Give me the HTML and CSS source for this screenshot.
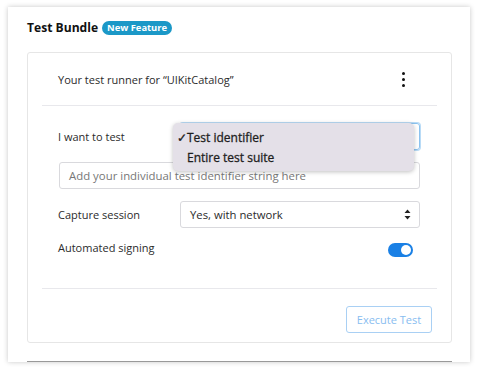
FILE: index.html
```html
<!DOCTYPE html>
<html>
<head>
<meta charset="utf-8">
<link rel="stylesheet" href="styles.css">
</head>
<body>
<div class="outer">
  <div class="title-row">
    <span class="title">Test Bundle</span>
    <span class="badge">New Feature</span>
  </div>
  <div class="card">
    <div class="card-head">
      <span class="runner">Your test runner for “UIKitCatalog”</span>
      <span class="kebab"><i></i><i></i><i></i></span>
    </div>
    <div class="form">
      <div class="row">
        <span class="label">I want to test</span>
        <div class="select focused">
          <div class="menu">
            <div class="item"><span class="check">✓</span>Test identifier</div>
            <div class="item">Entire test suite</div>
          </div>
        </div>
      </div>
      <div class="input">Add your individual test identifier string here</div>
      <div class="row">
        <span class="label">Capture session</span>
        <div class="select">
          <span>Yes, with network</span>
          <svg class="arrows" width="7" height="11" viewBox="0 0 7 11"><path d="M3.5 0.5 L6.5 4 H0.5 Z M3.5 10.5 L6.5 7 H0.5 Z" fill="#222"/></svg>
        </div>
      </div>
      <div class="row toggle-row">
        <span class="label">Automated signing</span>
        <span class="toggle"><i></i></span>
      </div>
    </div>
    <div class="footer">
      <button class="btn">Execute Test</button>
    </div>
  </div>
  <div class="next"></div>
</div>
</body>
</html>
```
FILE: styles.css
```css
html, body { margin: 0; padding: 0; background: #fff; }
body { font-family: "Open Sans", "Liberation Sans", sans-serif; color: #2b2b2b; width: 478px; height: 370px; overflow: hidden; }
.outer {
  margin: 7px 8px 0 8px;
  height: 355px;
  box-sizing: border-box;
  background: #fff;
  box-shadow: 0 0 5px rgba(0,0,0,0.22);
  padding: 12px 18px 0 19px;
  display: flex;
  flex-direction: column;
}
.title-row { display: flex; align-items: center; gap: 4px; height: 17px; }
.title { font-weight: 700; font-size: 12.1px; color: #111; }
.badge {
  background: #1b98c7; color: #fff; font-weight: 700; font-size: 9.4px;
  border-radius: 8px; padding: 0 5px; height: 14px; line-height: 14px;
}
.card {
  margin-top: 16px;
  border: 1px solid #e6e6e6;
  border-radius: 3px;
  height: 291px;
  box-sizing: border-box;
  display: flex;
  flex-direction: column;
}
.card-head {
  margin: 0 14px 0 14px;
  height: 52px;
  border-bottom: 1px solid #e8e8ec;
  display: flex; align-items: center; justify-content: space-between;
  padding: 0 32px 0 16px;
  font-size: 11px;
}
.kebab { display: flex; flex-direction: column; gap: 3px; }
.kebab i { width: 3px; height: 3px; background: #111; border-radius: 50%; display: block; }
.form { margin: 0 14px; padding: 17px 17px 0 16px; border-bottom: 1px solid #e8e8ec; height: 183px; box-sizing: border-box; display: flex; flex-direction: column; }
.row { display: flex; align-items: center; font-size: 11px; }
.label { width: 122px; flex: none; }
.select {
  flex: 1; height: 27px; box-sizing: border-box; border: 1px solid #d9d9dd; border-radius: 3px;
  display: flex; align-items: center; justify-content: space-between; padding: 0 8px 0 9px; position: relative;
  font-size: 11.3px;
}
.select.focused { border-color: #8cc3ef; box-shadow: 0 0 0 1px #b9dbf6; }
.menu {
  position: absolute; left: -8px; top: -1px; width: 241px; height: 48px; box-sizing: border-box;
  background: #e4e0e8; border-radius: 5px; box-shadow: 0 1px 4px rgba(0,0,0,0.25);
  padding: 5px 0 0 4px; font-size: 12px; color: #1e1e1e; -webkit-text-stroke: 0.3px #1e1e1e;
}
.item { height: 20px; line-height: 20px; padding-left: 10px; position: relative; }
.check { position: absolute; left: 0; }
.input {
  margin-top: 12px; height: 27px; box-sizing: border-box; border: 1px solid #d9d9dd; border-radius: 3px;
  font-size: 11.4px; color: #777; display: flex; align-items: center; padding-left: 9px; margin-left: 1px;
}
.row + .input + .row { margin-top: 12px; }
.arrows { display: block; }
.toggle-row { margin-top: 12px; align-items: flex-start; justify-content: space-between; padding-right: 7px; }
.toggle { width: 25px; height: 14px; margin-top: 3px; background: #1a80e5; border-radius: 7px; position: relative; display: block; }
.toggle i { position: absolute; right: 2px; top: 2px; width: 10px; height: 10px; border-radius: 50%; background: #fff; }
.footer { display: flex; justify-content: flex-end; padding: 17px 19px 0 0; }
.btn {
  font-family: "Open Sans", "Liberation Sans", sans-serif; font-size: 11px; color: #88bdf0;
  background: #fff; border: 1px solid #a9d0f4; border-radius: 3px; width: 86px; height: 27px; padding: 0;
}
.next { margin-top: 18px; height: 0; border-top: 1px solid #999; }
```
